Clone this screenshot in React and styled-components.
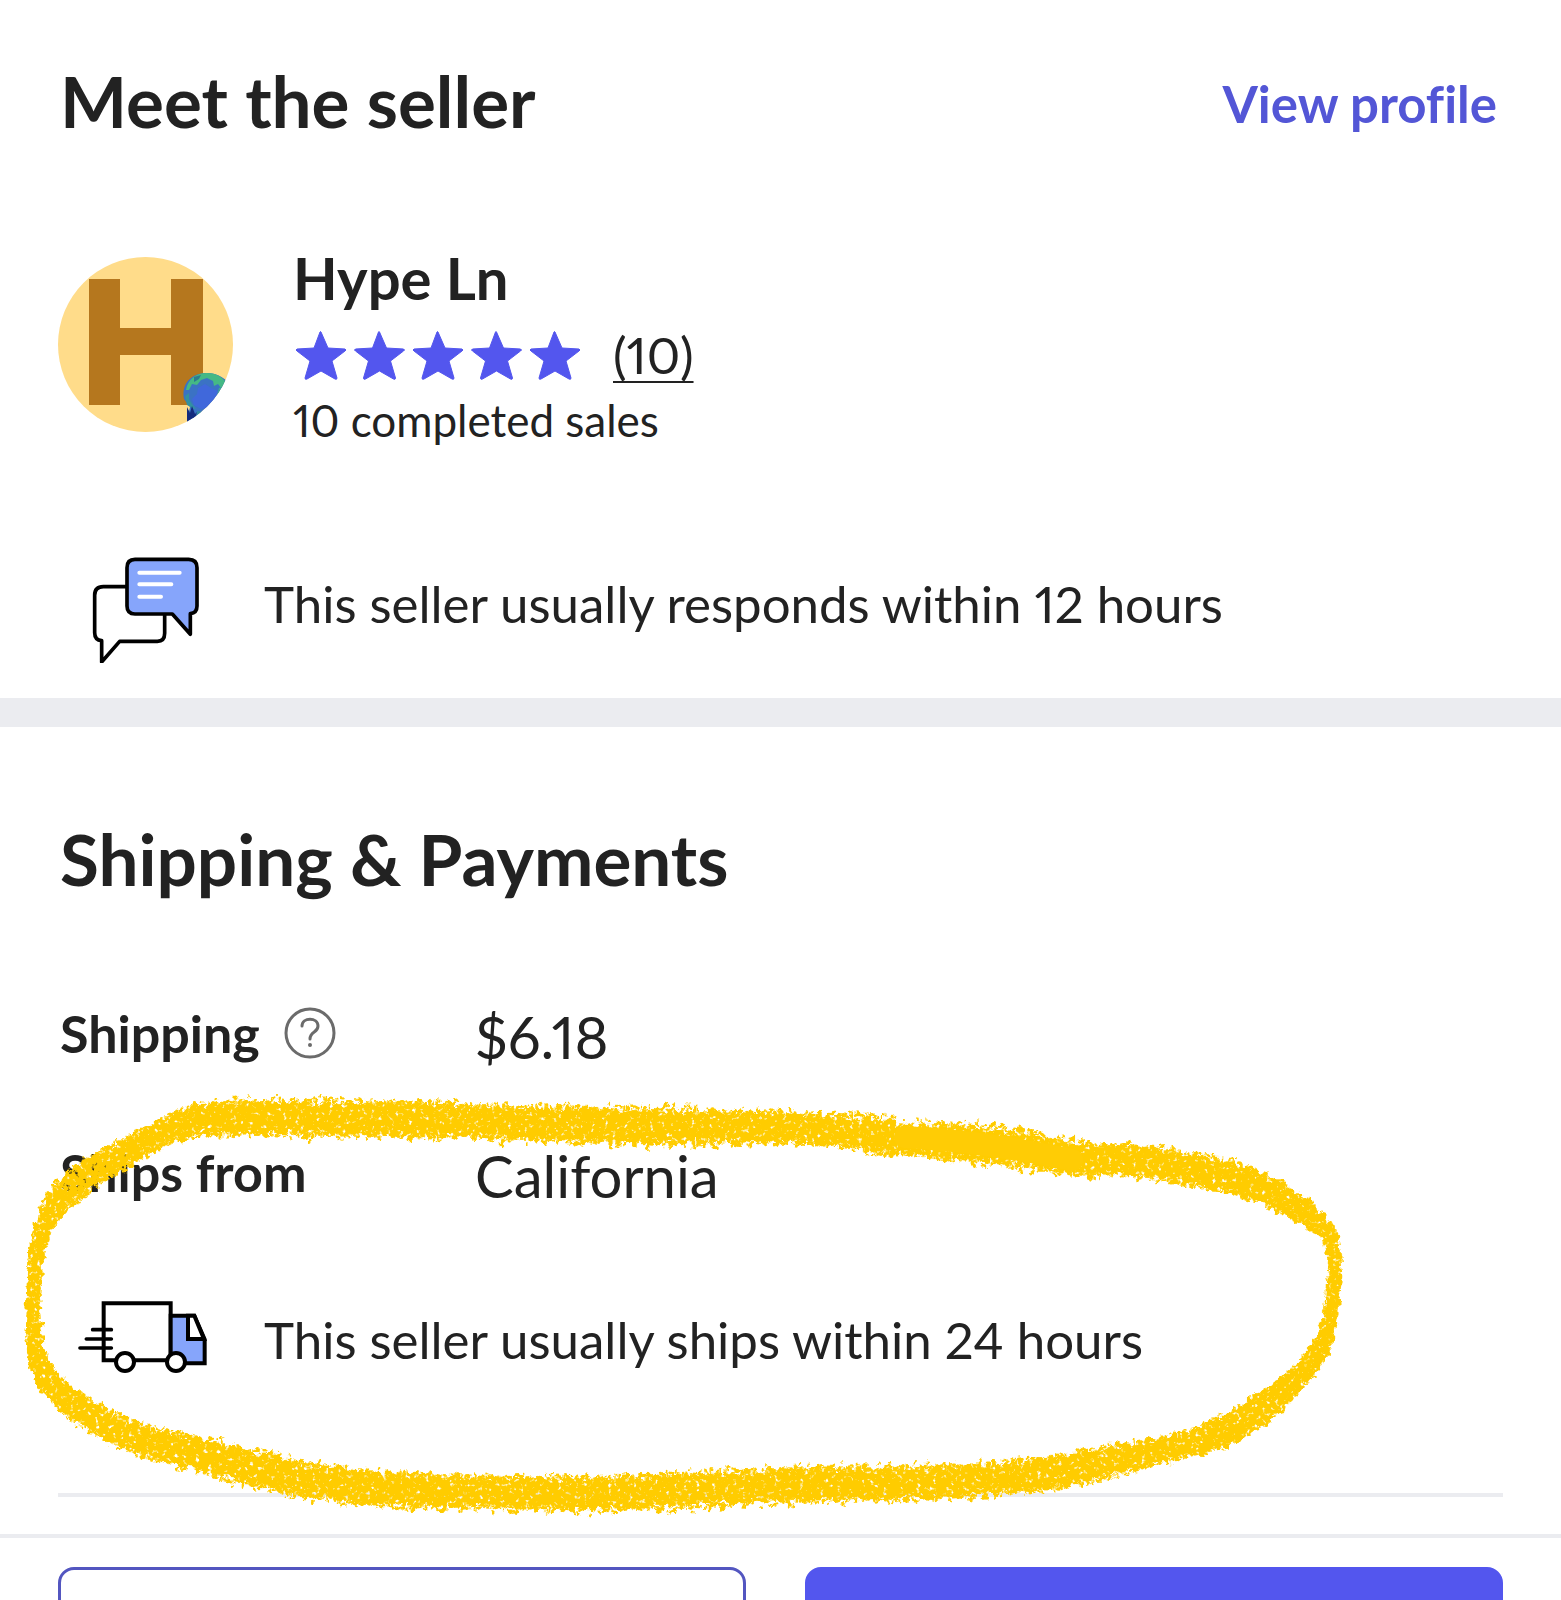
import styled, { createGlobalStyle } from 'styled-components'

const GlobalStyle = createGlobalStyle`
  * {
    box-sizing: border-box;
    margin: 0;
    padding: 0;
  }
  body {
    background: #fff;
    color: #222;
    font-family: Lato, "Open Sans", sans-serif;
    font-variant-ligatures: none;
    font-variant-numeric: proportional-nums;
  }
`
const Page = styled.main`
  display: flex;
  flex-direction: column;
  height: 100vh;
  overflow: hidden;
`
const Section = styled.section`
  flex-shrink: 0;
  padding: 57px 58px 35px;
`
const ShippingSection = styled(Section)`
  position: relative;
  border-top: 29px solid #ebecf0;
  padding: 88px 58px 37px;
`
const SectionHeader = styled.header`
  display: flex;
  align-items: center;
  justify-content: space-between;
  padding: 0 6px 0 0;
`
const Title = styled.h2`
  padding-left: 2px;
  font-size: 71px;
  line-height: 88px;
  font-weight: 700;
`
const ProfileLink = styled.a`
  padding-top: 6px;
  color: #5356d6;
  font-size: 51px;
  line-height: 60px;
  font-weight: 700;
  text-decoration: none;
`
const Seller = styled.div`
  display: flex;
  align-items: center;
  gap: 60px;
  margin-top: 99px;
`
const Avatar = styled.svg`
  width: 175px;
  height: 175px;
  flex-shrink: 0;
`
const SellerName = styled.h3`
  font-size: 58px;
  line-height: 68px;
  font-weight: 700;
`
const Rating = styled.div`
  display: flex;
  align-items: center;
  gap: 32px;
  margin: 13px 0 10px;
`
const Stars = styled.svg`
  width: 288px;
  height: 50px;
`
const ReviewLink = styled.a`
  color: #222;
  font-size: 51px;
  line-height: 60px;
  text-decoration: underline;
  text-decoration-thickness: 2px;
  text-underline-offset: 7px;
  text-decoration-skip-ink: none;
`
const Sales = styled.p`
  font-size: 44px;
  line-height: 50px;
`
const Note = styled.div`
  display: flex;
  align-items: center;
  gap: 26px;
  margin-top: ${props => props.$space}px;
`
const NoteIcon = styled.svg`
  width: 180px;
  height: 118px;
  flex-shrink: 0;
`
const NoteText = styled.p`
  font-size: 51px;
  line-height: 60px;
`
const Details = styled.dl`
  display: flex;
  flex-direction: column;
  gap: 71px;
  margin-top: 100px;
`
const DetailRow = styled.div`
  display: grid;
  grid-template-columns: 417px 1fr;
  align-items: start;
`
const Label = styled.dt`
  display: flex;
  align-items: center;
  gap: 24px;
  padding-left: 2px;
  font-size: 52px;
  line-height: 60px;
  font-weight: 700;
`
const Value = styled.dd`
  font-size: 58px;
  line-height: 68px;
`
const HelpButton = styled.button`
  display: flex;
  border: none;
  background: none;
  cursor: pointer;
`
const Divider = styled.hr`
  border: none;
  height: 4px;
  background: #ebecf0;
  margin-top: 94px;
`
const Footer = styled.footer`
  display: grid;
  grid-template-columns: 69fr 70fr;
  gap: 59px;
  flex-shrink: 0;
  border-top: 4px solid #ebecf0;
  padding: 29px 58px;
`
const ActionButton = styled.button`
  height: 116px;
  border: 3px solid #5356c0;
  border-radius: 16px;
  background: #fff;
  cursor: pointer;
`
const PrimaryButton = styled(ActionButton)`
  border-color: #5356ee;
  background: #5356ee;
`
const Marker = styled.svg`
  position: absolute;
  left: 0;
  top: 333px;
  width: 1400px;
  height: 500px;
  pointer-events: none;
`

// x, y and thickness along the marker stroke
const markerPoints = [
  [896, 1137, 34], [800, 1128, 30], [650, 1126, 34], [500, 1122, 33], [410, 1119, 33], [320, 1118, 34],
  [213, 1118, 31], [173, 1128, 27], [140, 1145, 26], [100, 1167, 28], [70, 1189, 28],
  [48, 1217, 22], [37, 1250, 18], [34, 1285, 17], [34, 1335, 18], [40, 1367, 22],
  [57, 1391, 26], [93, 1418, 28], [140, 1440, 29], [200, 1455, 32], [267, 1472, 33],
  [333, 1484, 33], [400, 1490, 33], [500, 1493, 32], [600, 1494, 33], [700, 1490, 33],
  [800, 1485, 33], [877, 1484, 32], [972, 1481, 31], [1045, 1474, 31], [1106, 1463, 30],
  [1160, 1451, 26], [1213, 1436, 29], [1255, 1414, 28], [1286, 1388, 25], [1313, 1360, 22],
  [1328, 1327, 18], [1334, 1287, 16], [1334, 1253, 17], [1323, 1228, 20], [1290, 1203, 27],
  [1240, 1179, 30], [1183, 1167, 31], [1125, 1160, 30], [1075, 1158, 33], [1010, 1147, 34],
  [953, 1142, 35], [890, 1138, 28],
]

const catmull = (a, b, c, d, t) =>
  0.5 * (2 * b + (c - a) * t + (2 * a - 5 * b + 4 * c - d) * t * t + (3 * b - a - 3 * c + d) * t * t * t)

const buildMarker = (points) => {
  let seed = 7
  const random = () => {
    seed = (seed * 16807) % 2147483647
    return seed / 2147483647
  }
  const left = []
  const right = []
  let grain = ''
  for (let i = 0; i < points.length - 1; i++) {
    const p0 = points[Math.max(i - 1, 0)]
    const p1 = points[i]
    const p2 = points[i + 1]
    const p3 = points[Math.min(i + 2, points.length - 1)]
    const length = Math.hypot(p2[0] - p1[0], p2[1] - p1[1])
    const steps = Math.ceil(length / 3)
    const angle = Math.atan2(p2[1] - p1[1], p2[0] - p1[0])
    for (let s = 0; s < steps; s++) {
      const [x, y, w] = [0, 1, 2].map(k => catmull(p0[k], p1[k], p2[k], p3[k], s / steps))
      const nx = -Math.sin(angle)
      const ny = Math.cos(angle)
      const a = w / 2 - 4 + random() * 3
      const b = w / 2 - 4 + random() * 3
      left.push(`${(x + nx * a).toFixed(1)} ${(y + ny * a).toFixed(1)}`)
      right.unshift(`${(x - nx * b).toFixed(1)} ${(y - ny * b).toFixed(1)}`)
      // loose grain gets thinner where the stroke is narrow
      const spread = Math.max(w - 16, 2) / 2
      for (let n = 0; n < 5; n++) {
        const side = n % 2 ? 1 : -1
        const off = side * (w / 2 - 3 + random() * random() * spread)
        const along = random() * 4
        const r = 1 + random() * 1.2
        const gx = x + nx * off + ny * along
        const gy = y + ny * off - nx * along
        grain += `M${(gx - r).toFixed(1)} ${gy.toFixed(1)}a${r.toFixed(1)} ${r.toFixed(1)} 0 1 0 ${(r * 2).toFixed(1)} 0a${r.toFixed(1)} ${r.toFixed(1)} 0 1 0 ${(-r * 2).toFixed(1)} 0`
      }
    }
  }
  return { body: `M${left.join('L')}L${right.join('L')}Z`, grain }
}

const marker = buildMarker(markerPoints)

const MarkerCircle = () => (
  <Marker viewBox="0 1060 1400 500" aria-hidden="true">
    <defs>
      <filter id="chalk" filterUnits="userSpaceOnUse" x="0" y="1060" width="1400" height="500">
        <feTurbulence type="fractalNoise" baseFrequency="0.14" numOctaves="2" seed="4" result="noise" />
        <feDisplacementMap in="SourceGraphic" in2="noise" scale="9" xChannelSelector="R" yChannelSelector="G" result="rough" />
        <feTurbulence type="fractalNoise" baseFrequency="0.24" numOctaves="2" seed="9" />
        <feColorMatrix values="0 0 0 0 0  0 0 0 0 0  0 0 0 0 0  0 5 0 0 -0.9" result="holes" />
        <feComposite in="rough" in2="holes" operator="in" />
      </filter>
    </defs>
    <g fill="#ffcc05" filter="url(#chalk)">
      <path d={marker.body} />
      <path d={marker.grain} />
    </g>
    <path d="M905 1137Q990 1142 1072 1160" fill="none" stroke="#ffcc05" strokeWidth="22" strokeLinecap="round" />
  </Marker>
)

const SellerAvatar = () => (
  <Avatar viewBox="0 0 175 175" role="img" aria-label="Hype Ln">
    <defs>
      <clipPath id="round">
        <circle cx="87.5" cy="87.5" r="87.5" />
      </clipPath>
    </defs>
    <g clipPath="url(#round)">
      <rect width="175" height="175" fill="#ffdc8a" />
      <path d="M31 22h31v49h51V22h32v126h-32V98H62v50H31z" fill="#b5771e" />
      <path d="M126 142C123 126 134 116 149 116C160 116 168 122 175 130V175H129V163L132 150Z" fill="#3b72c4" />
      <path d="M128 133C130 122 138 116 149 116C157 116 163 119 168 125L163 131L160 127L156 129L155 124L149 121L143 123L139 128L134 127L131 133Z" fill="#45b985" />
      <path d="M136 120L143 118L141 122L136 125Z" fill="#2c7b8e" />
      <path d="M127 139L131 136L131 142L134 147L138 152L134 151L129 148Z" fill="#3391a0" />
      <path d="M134 142L139 137L140 131L147 127L153 131L160 134L158 143L150 151L143 152L136 148Z" fill="#4068db" />
      <path d="M161 131L166 129L162 138L158 141Z" fill="#3fa795" />
      <path d="M129 150L132 156L134 149L137 157L139 155L137 165L129 166Z" fill="#142b7d" />
      <path d="M139 154L146 155L143 161L138 163Z" fill="#338ca0" />
    </g>
  </Avatar>
)

const RatingStars = () => (
  <Stars viewBox="-2 0 288 50" role="img" aria-label="5 out of 5 stars">
    {[0, 1, 2, 3, 4].map(i => (
      <path
        key={i}
        transform={`translate(${i * 58.5} 0)`}
        d="M26 2L33 18L50 19Q52 20 50 21L37 31L42 48Q42 50 40 49L26 41L12 49Q10 50 10 48L15 31L2 21Q0 20 2 19L19 18L25 2Q25.500 1 26 2Z"
        fill="#5356ee"
        stroke="#5356ee"
      />
    ))}
  </Stars>
)

const ChatIcon = () => (
  <NoteIcon viewBox="-36 15 540 354" aria-hidden="true">
    <g fill="none" stroke="#000" strokeWidth="11" strokeLinejoin="round">
      <path d="M170 140H100Q74 140 74 166V278Q74 300 95 302V366L149 304H262Q284 304 284 280V224" />
      <path d="M195 58H356Q381 58 381 83V198Q381 219 361 221V283L307 222H195Q171 222 171 198V83Q171 58 195 58Z" fill="#86a5fb" />
      <path d="M208 98H329M208 133H304M208 170H273" stroke="#fff" strokeWidth="12" strokeLinecap="round" />
    </g>
  </NoteIcon>
)

const TruckIcon = () => (
  <NoteIcon viewBox="-6 3 540 354" aria-hidden="true">
    <g fill="#fff" stroke="#000" strokeWidth="12">
      <path d="M131 70H332V241H131Z" />
      <path d="M332 107H403L434 178V250H332Z" fill="#86a5fb" />
      <path d="M384 107H403L432 177H384Z" />
      <path d="M98 149H154M79 177H154M60 204H154" strokeLinecap="round" strokeWidth="11" />
      <circle cx="195" cy="246" r="27" />
      <circle cx="348" cy="246" r="27" />
    </g>
  </NoteIcon>
)

const HelpIcon = () => (
  <svg width="52" height="52" viewBox="0 0 52 52" fill="none" stroke="#6b6b6b" aria-hidden="true">
    <circle cx="26" cy="26" r="24" strokeWidth="3" />
    <path d="M18 19C18 10 34 10 34 19C34 26 26 24 26 32" strokeWidth="3" strokeLinecap="round" />
    <circle cx="26" cy="38" r="2" fill="#6b6b6b" stroke="none" />
  </svg>
)

const App = () => {
  return (
    <Page>
      <GlobalStyle />
      <Section>
        <SectionHeader>
          <Title>Meet the seller</Title>
          <ProfileLink href="#profile">View profile</ProfileLink>
        </SectionHeader>
        <Seller>
          <SellerAvatar />
          <div>
            <SellerName>Hype Ln</SellerName>
            <Rating>
              <RatingStars />
              <ReviewLink href="#reviews">(10)</ReviewLink>
            </Rating>
            <Sales>10 completed sales</Sales>
          </div>
        </Seller>
        <Note $space={100}>
          <ChatIcon />
          <NoteText>This seller usually responds within 12 hours</NoteText>
        </Note>
      </Section>
      <ShippingSection>
        <Title>Shipping &amp; Payments</Title>
        <Details>
          <DetailRow>
            <Label>
              Shipping
              <HelpButton type="button" aria-label="About shipping">
                <HelpIcon />
              </HelpButton>
            </Label>
            <Value>$6.18</Value>
          </DetailRow>
          <DetailRow>
            <Label>Ships from</Label>
            <Value>California</Value>
          </DetailRow>
        </Details>
        <Note $space={71}>
          <TruckIcon />
          <NoteText>This seller usually ships within 24 hours</NoteText>
        </Note>
        <Divider />
        <MarkerCircle />
      </ShippingSection>
      <Footer>
        <ActionButton type="button" aria-label="Make an offer" />
        <PrimaryButton type="button" aria-label="Buy now" />
      </Footer>
    </Page>
  );
};

export default App;
